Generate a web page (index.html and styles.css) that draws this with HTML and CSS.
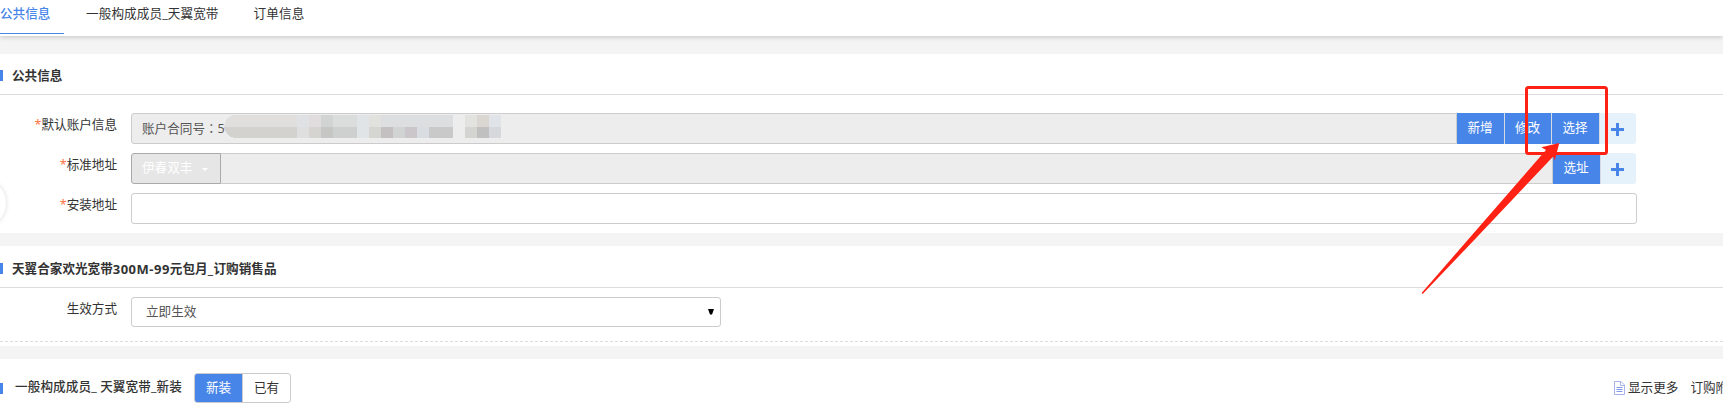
FILE: index.html
```html
<!DOCTYPE html>
<html lang="zh-CN">
<head>
  <meta charset="UTF-8" />
  <title>公共信息</title>
  <link rel="stylesheet" href="styles.css">
</head>
<body>

<nav class="tabs">
  <a class="tab active">公共信息</a>
  <a class="tab">一般构成成员_天翼宽带</a>
  <a class="tab">订单信息</a>
</nav>

<section class="panel panel-public">
  <h2 class="panel-title">公共信息</h2>
  <div class="form">
    <div class="form-row">
      <label class="form-label"><i>*</i>默认账户信息</label>
      <div class="form-group">
        <div class="field disabled">账户合同号<span class="colon" lang="zh-TW">：</span>5
          <svg class="mask" width="288" height="24" viewBox="0 0 288 24" shape-rendering="crispEdges">
            <path d="M10 0H73V12H0C1 5 4 1 10 0Z" fill="#e0dfde"/>
            <path d="M0 12H73V23H10C5 22 1 18 0 12Z" fill="#d3d2cf"/>
            <path d="M73 0h12v12h-12z" fill="#dfe1e5"/><path d="M85 0h12v12h-12z" fill="#e1dddf"/>
            <path d="M97 0h12v12h-12z" fill="#d1d4d2"/><path d="M109 0h24v12h-24z" fill="#dbdddd"/>
            <path d="M133 0h12v23h-12z" fill="#e1e4e7"/><path d="M145 0h12v12h-12z" fill="#e1e1dd"/>
            <path d="M157 0h72v12h-72z" fill="#dddedf"/><path d="M241 0h12v12h-12z" fill="#e2e2df"/>
            <path d="M253 0h12v12h-12z" fill="#dad7d2"/><path d="M265 0h12v12h-12z" fill="#e0e3e7"/>
            <path d="M73 12h12v11h-12z" fill="#dfdfe0"/><path d="M85 12h12v11h-12z" fill="#d5d4d0"/>
            <path d="M97 12h12v11h-12z" fill="#c6c7c4"/><path d="M109 12h24v11h-24z" fill="#cecfcf"/>
            <path d="M145 12h12v11h-12z" fill="#d5d5d2"/><path d="M157 12h12v11h-12z" fill="#c4c0c1"/>
            <path d="M169 12h12v11h-12z" fill="#d1d4d2"/><path d="M181 12h12v11h-12z" fill="#cac6c9"/>
            <path d="M193 12h12v11h-12z" fill="#d9dce0"/><path d="M205 12h24v11h-24z" fill="#c9c9ca"/>
            <path d="M241 12h12v11h-12z" fill="#d4d4d1"/><path d="M253 12h12v11h-12z" fill="#c0c0c0"/>
            <path d="M265 12h12v11h-12z" fill="#d6d8dc"/>
          </svg>
        </div>
        <button class="btn">新增</button>
        <button class="btn">修改</button>
        <button class="btn">选择</button>
        <button class="btn-add"></button>
      </div>
    </div>
    <div class="form-row">
      <label class="form-label"><i>*</i>标准地址</label>
      <div class="form-group">
        <div class="dropdown">伊春双丰<span class="caret"></span></div>
        <div class="field disabled joined"></div>
        <button class="btn">选址</button>
        <button class="btn-add narrow"></button>
      </div>
    </div>
    <div class="form-row">
      <label class="form-label"><i>*</i>安装地址</label>
      <div class="form-group full">
        <div class="field"></div>
      </div>
    </div>
  </div>
</section>

<section class="panel panel-sale">
  <h2 class="panel-title">天翼合家欢光宽带<span class="num">300M-99</span>元包月<span class="num">_</span>订购销售品</h2>
  <div class="form form-sale">
    <div class="form-row">
      <label class="form-label">生效方式</label>
      <div class="select">立即生效
        <svg width="6" height="6" viewBox="0 0 6 6"><path d="M0 0H6L4 5.5H2Z" fill="#000"/></svg>
      </div>
    </div>
  </div>
</section>

<section class="panel panel-member">
  <h2 class="member-title">一般构成成员_ 天翼宽带_新装</h2>
  <div class="switch">
    <span class="switch-item on">新装</span>
    <span class="switch-item">已有</span>
  </div>
  <div class="links">
    <a><svg class="doc" width="11" height="14" viewBox="0 0 11 14" fill="none" stroke="#a9b4ee">
      <path d="M.5 .5H7L10.5 4V13.5H.5ZM6.5 .5V4.5H10.5" /><path d="M2.5 6.5H8.5M2.5 8.5H8.5M2.5 10.5H8.5" stroke="#7f9be8"/>
    </svg>显示更多</a>
    <a>订购附</a>
  </div>
</section>

<div class="side-handle"></div>

<svg class="marker" width="200" height="220" viewBox="1420 80 200 220">
  <rect x="1526.5" y="87.5" width="80" height="66" rx="2" fill="none" stroke="#ff2113" stroke-width="3"/>
  <path d="M1559.3 143L1541.3 147.3L1546 150L1467.7 240L1421.6 293L1422.7 294L1474.2 240L1553.2 156.5L1554.8 160.2Z" fill="#ff2113"/>
</svg>

</body>
</html>
```

FILE: styles.css
```css
* {
  box-sizing: border-box;
}

body {
  margin: 0;
  height: 404px;
  overflow: hidden;
  background-color: #f4f4f4;
  color: #333;
  font-family: "Open Sans", "Noto Sans CJK SC", sans-serif;
  font-size: 12.6px;
  line-height: 18px;
}

.tabs {
  display: flex;
  height: 36px;
  background: #fff;
  box-shadow: 0 1px 5px rgba(0, 0, 0, 0.2);
}

.tab {
  height: 34px;
  padding-top: 5px;
  margin-right: 22px;
}

.tab + .tab {
  padding: 5px 13px 0 0;
  letter-spacing: 0.1px;
}

.tab.active {
  width: 64px;
  color: #4885e8;
  font-weight: 500;
  border-bottom: 1px solid #4885e8;
}

.panel {
  background: #fff;
}

.panel-public {
  height: 179px;
  margin-top: 18px;
}

.panel-sale {
  height: 100px;
  margin-top: 13px;
}

.panel-title {
  display: flex;
  align-items: center;
  height: 41px;
  margin: 0;
  padding-top: 3px;
  border-bottom: 1px solid #ddd;
  font-size: 12.6px;
  font-weight: 600;
}

.panel-title::before,
.panel-member::before {
  content: "";
  flex: none;
  width: 3px;
  height: 11px;
  margin-right: 9px;
  background: #4885e8;
}

.panel-sale .panel-title {
  height: 42px;
  padding-top: 4px;
}

.num {
  font-size: 13px;
  font-weight: 700;
  letter-spacing: 0.5px;
}

.form {
  display: flex;
  flex-direction: column;
  gap: 9px;
  padding-top: 18px;
}

.form-sale {
  height: 54px;
  padding-top: 9px;
  border-bottom: 1px dashed #ddd;
}

.form-row {
  display: flex;
}

.form-label {
  width: 117px;
  margin-right: 14px;
  padding-top: 3px;
  text-align: right;
}

.form-label i {
  color: #ff6c37;
  font-style: normal;
}

.form-group {
  display: flex;
  width: 1505px;
  height: 31px;
}

.form-group.full {
  width: 1506px;
}

.field {
  position: relative;
  flex: 1;
  padding: 5px 10px;
  border: 1px solid #ccc;
  border-radius: 3px;
  color: #555;
}

.field.disabled {
  background: #ededed;
  border-radius: 3px 0 0 3px;
  line-height: 17px;
}

.field.joined {
  border-left: 0;
  border-radius: 0;
}

.colon {
  font-family: "Noto Sans CJK TC", sans-serif;
}

.mask {
  position: absolute;
  left: 92px;
  top: 1px;
}

.btn {
  width: 48px;
  padding: 0 1px 2px 0;
  border: 0;
  border-right: 1px solid #d5dbe3;
  background: #4885e8;
  color: #fff;
  font: inherit;
}

.btn + .btn {
  width: 47px;
}

.btn + .btn + .btn {
  width: 48px;
}

.btn-add {
  width: 36px;
  border: 0;
  border-radius: 0 3px 3px 0;
  background:
    linear-gradient(#4885e8, #4885e8) 11px 15px / 13px 3px no-repeat,
    linear-gradient(#4885e8, #4885e8) 16px 10px / 3px 13px no-repeat,
    #e5f2fb;
}

.btn-add.narrow {
  width: 35px;
  background-position: 10px 15px, 15px 10px, 0 0;
}

.dropdown {
  display: flex;
  align-items: center;
  width: 90px;
  padding: 0 0 2px 10px;
  border: 1px solid #aaa;
  border-radius: 3px 0 0 3px;
  background: #e6e6e6;
  color: #fff;
}

.caret {
  margin: 4px 0 0 10px;
  border: 3px solid transparent;
  border-top-color: #fff;
  border-bottom: 0;
}

.select {
  display: flex;
  align-items: center;
  justify-content: space-between;
  width: 590px;
  height: 30px;
  padding: 0 6px 0 14px;
  border: 1px solid #ccc;
  border-radius: 3px;
  color: #555;
}

.panel-member {
  display: flex;
  align-items: center;
  height: 58px;
  margin-top: 13px;
}

.member-title {
  flex: none;
  width: 179px;
  margin: 0 0 2px 3px;
  font-size: 12.6px;
  font-weight: 500;
  letter-spacing: 0.1px;
}

.switch {
  display: flex;
  flex: none;
  width: 97px;
  height: 30px;
  border: 1px solid #ccc;
  border-radius: 3px;
  line-height: 28px;
  text-align: center;
}

.switch-item {
  flex: 1;
}

.switch-item.on {
  border-right: 1px solid #ccc;
  border-radius: 2px 0 0 2px;
  background: #4885e8;
  color: #fff;
}

.links {
  display: flex;
  flex: none;
  gap: 12px;
  margin-left: 1323px;
  white-space: nowrap;
}

.doc {
  margin-right: 3px;
  vertical-align: -3px;
}

.side-handle {
  position: absolute;
  left: -42px;
  top: 179px;
  width: 48px;
  height: 48px;
  border-radius: 50%;
  background: #fff;
  box-shadow: 0 0 5px rgba(0, 0, 0, 0.15);
}

.marker {
  position: absolute;
  left: 1420px;
  top: 80px;
}
```
